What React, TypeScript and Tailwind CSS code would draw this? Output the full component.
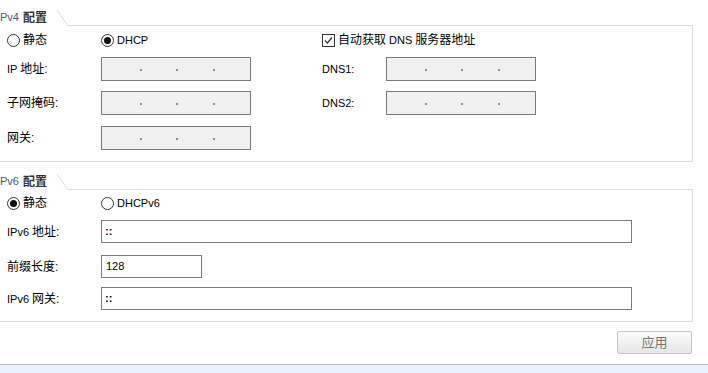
import React from "react";

const font = { fontFamily: '"Liberation Sans", "Noto Sans CJK SC", sans-serif' };

function L({ children }: { children: React.ReactNode }) {
  return <span className="text-[11px]">{children}</span>;
}

function Radio({ checked }: { checked?: boolean }) {
  return (
    <span className="w-[13px] h-[13px] rounded-full border border-[#333] bg-white flex items-center justify-center shrink-0">
      {checked && <span className="w-[7px] h-[7px] rounded-full bg-[#111]" />}
    </span>
  );
}

function Check() {
  return (
    <span className="w-[13px] h-[13px] border border-[#333] bg-white flex items-center justify-center shrink-0">
      <svg width="11" height="11" viewBox="0 0 11 11">
        <path d="M2 5.5 L4.5 8 L9 2.5" fill="none" stroke="#333" strokeWidth="1.3" />
      </svg>
    </span>
  );
}

function IpBox() {
  return (
    <div className="w-[150px] h-[24px] border border-[#7a7a7a] bg-[#f0f0f0] flex items-center">
      <span className="w-[2px] h-[2px] bg-[#8a8aa6] ml-[38px] mt-[2px]" />
      <span className="w-[2px] h-[2px] bg-[#8a8aa6] ml-[34px] mt-[2px]" />
      <span className="w-[2px] h-[2px] bg-[#8a8aa6] ml-[35px] mt-[2px]" />
    </div>
  );
}

function Tab({ label }: { label: string }) {
  return (
    <div className="flex items-end h-[21px] w-[693px]">
      <div className="w-[57px] h-[21px] flex items-center pt-[4px] text-[12px] leading-none whitespace-nowrap">
        <span className="text-[#4a5878] text-[11px]">{label}</span>
        <span className="ml-[4px] font-bold text-[#333]">配置</span>
      </div>
      <svg width="11" height="16" viewBox="0 0 11 16" className="shrink-0 block">
        <line x1="0" y1="0" x2="11" y2="16" stroke="#dcdcdc" strokeWidth="1" />
      </svg>
      <div className="flex-1 h-px bg-[#dcdcdc]" />
    </div>
  );
}

export default function App() {
  return (
    <div className="w-[708px] h-[373px] bg-white overflow-hidden text-[12px] text-[#000]" style={font}>
      <div className="pt-[5px]">
        <Tab label="Pv4" />
        <div className="w-[693px] border-r border-b border-[#dcdcdc] pb-[11px]">
          <div className="h-[28px] flex items-center">
            <div className="w-[94px] ml-[7px] flex items-center gap-[3px]">
              <Radio />
              <span>静态</span>
            </div>
            <div className="w-[221px] flex items-center gap-[3px]">
              <Radio checked />
              <L>DHCP</L>
            </div>
            <div className="flex items-center gap-[3px]">
              <Check />
              <span>
                自动获取<L> DNS </L>服务器地址
              </span>
            </div>
          </div>
          <div className="mt-[3px] h-[24px] flex items-center">
            <span className="w-[94px] ml-[7px]">
              <L>IP </L>地址:
            </span>
            <IpBox />
            <span className="w-[64px] ml-[71px]">
              <L>DNS1:</L>
            </span>
            <IpBox />
          </div>
          <div className="mt-[10px] h-[24px] flex items-center">
            <span className="w-[94px] ml-[7px]">子网掩码:</span>
            <IpBox />
            <span className="w-[64px] ml-[71px]">
              <L>DNS2:</L>
            </span>
            <IpBox />
          </div>
          <div className="mt-[11px] h-[24px] flex items-center">
            <span className="w-[94px] ml-[7px]">网关:</span>
            <IpBox />
          </div>
        </div>

        <div className="mt-[7px]">
          <Tab label="Pv6" />
          <div className="w-[693px] border-r border-b border-[#dcdcdc] pb-[11px]">
            <div className="h-[26px] flex items-center">
              <div className="w-[94px] ml-[7px] flex items-center gap-[3px]">
                <Radio checked />
                <span>静态</span>
              </div>
              <div className="flex items-center gap-[3px]">
                <Radio />
                <L>DHCPv6</L>
              </div>
            </div>
            <div className="mt-[4px] h-[23px] flex items-center">
              <span className="w-[94px] ml-[7px]">
                <L>IPv6 </L>地址:
              </span>
              <div className="w-[531px] h-[23px] border border-[#7a7a7a] bg-white flex items-center pl-[3px] text-[11px] font-bold">::</div>
            </div>
            <div className="mt-[12px] h-[23px] flex items-center">
              <span className="w-[94px] ml-[7px]">前缀长度:</span>
              <div className="w-[101px] h-[23px] border border-[#7a7a7a] bg-white flex items-center pl-[4px] text-[11px]">128</div>
            </div>
            <div className="mt-[9px] h-[23px] flex items-center">
              <span className="w-[94px] ml-[7px]">
                <L>IPv6 </L>网关:
              </span>
              <div className="w-[531px] h-[23px] border border-[#7a7a7a] bg-white flex items-center pl-[3px] text-[11px] font-bold">::</div>
            </div>
          </div>
        </div>

        <div className="mt-[9px] flex justify-end pr-[16px]">
          <button className="w-[75px] h-[23px] border border-[#c4c4c4] rounded-[2px] bg-gradient-to-b from-[#fbfbfb] to-[#e6e6e6] text-[13px] text-[#777] flex items-center justify-center">
            应用
          </button>
        </div>

        <div className="mt-[10px] h-[20px] border-t border-[#b4b8be] bg-[#e9f1fc]" />
      </div>
    </div>
  );
}
